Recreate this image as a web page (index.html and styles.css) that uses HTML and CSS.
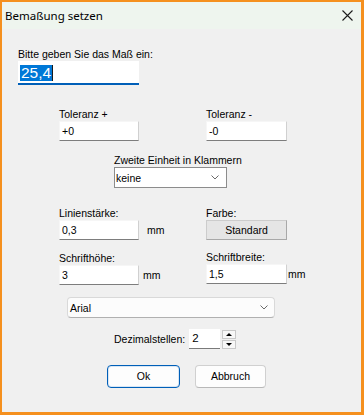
FILE: index.html
```html
<!DOCTYPE html>
<html lang="de">
<head>
<meta charset="utf-8">
<title>Bemaßung setzen</title>
<link rel="stylesheet" href="styles.css">
</head>
<body>
<div class="window">
  <div class="titlebar">
    <span class="title">Bemaßung setzen</span>
    <svg class="close" width="11" height="11" viewBox="0 0 11 11"><path d="M0.5 0.5 L10.5 10.5 M10.5 0.5 L0.5 10.5" stroke="#1b1b1b" stroke-width="1.1" fill="none"/></svg>
  </div>
  <div class="content">
    <div class="main-field">
      <div class="label">Bitte geben Sie das Maß ein:</div>
      <div class="main-edit"><span class="sel">25,4</span></div>
    </div>

    <div class="pair tol">
      <div class="field">
        <div class="label">Toleranz +</div>
        <div class="edit">+0</div>
      </div>
      <div class="field">
        <div class="label">Toleranz -</div>
        <div class="edit wide">-0</div>
      </div>
    </div>

    <div class="unit">
      <div class="label">Zweite Einheit in Klammern</div>
      <div class="combo">
        <span>keine</span>
        <svg width="8" height="5" viewBox="0 0 8 5"><path d="M0.5 0.5 L4 4 L7.5 0.5" stroke="#6a6a6a" stroke-width="1" fill="none"/></svg>
      </div>
    </div>

    <div class="pair line">
      <div class="field">
        <div class="label">Linienstärke:</div>
        <div class="with-unit">
          <div class="edit">0,3</div>
          <span class="mm gap8">mm</span>
        </div>
      </div>
      <div class="field">
        <div class="label">Farbe:</div>
        <div class="classic-btn">Standard</div>
      </div>
    </div>

    <div class="pair font">
      <div class="field">
        <div class="label">Schrifthöhe:</div>
        <div class="with-unit">
          <div class="edit">3</div>
          <span class="mm gap4">mm</span>
        </div>
      </div>
      <div class="field up">
        <div class="label">Schriftbreite:</div>
        <div class="with-unit">
          <div class="edit wide">1,5</div>
          <span class="mm gap1">mm</span>
        </div>
      </div>
    </div>

    <div class="font-row">
      <div class="font-combo">
        <span>Arial</span>
        <svg width="8" height="5" viewBox="0 0 8 5"><path d="M0.5 0.5 L4 4 L7.5 0.5" stroke="#6a6a6a" stroke-width="1" fill="none"/></svg>
      </div>
    </div>

    <div class="dec-row">
      <span class="dec-label">Dezimalstellen:</span>
      <div class="dec-edit">2</div>
      <div class="spin">
        <div class="spin-btn"><svg width="6" height="3" viewBox="0 0 6 3"><path d="M0 3 L3 0 L6 3 Z" fill="#000"/></svg></div>
        <div class="spin-btn"><svg width="6" height="3" viewBox="0 0 6 3"><path d="M0 0 L6 0 L3 3 Z" fill="#000"/></svg></div>
      </div>
    </div>

    <div class="buttons">
      <div class="btn default">Ok</div>
      <div class="btn">Abbruch</div>
    </div>
  </div>
</div>
</body>
</html>
```

FILE: styles.css
```css
* { box-sizing: border-box; margin: 0; padding: 0; }
html, body { width: 364px; height: 415px; overflow: hidden; }
body {
  font-family: "Liberation Sans", Arial, sans-serif;
  font-size: 10.5px;
  color: #000;
  background: #f5901e;
}
.window {
  width: 364px;
  height: 415px;
  border-style: solid;
  border-color: #f5901e;
  border-width: 2px 3px 3px 2px;
  display: flex;
  flex-direction: column;
  background: #f0f0f0;
}
.titlebar {
  height: 27px;
  flex: none;
  background: #eef5ee;
  display: flex;
  align-items: center;
  justify-content: space-between;
  padding: 0 8px 0 3px;
  border-radius: 5px 5px 0 0;
}
.title {
  font-family: "Noto Sans", "Open Sans", sans-serif;
  font-size: 11.5px;
  color: #000;
}
.close { display: block; }
.content {
  flex: 1;
  display: flex;
  flex-direction: column;
  background: #f0f0f0;
}
.label { line-height: 13px; white-space: nowrap; }

.main-field { margin: 19px 0 0 16px; }
.main-edit {
  width: 121px;
  height: 24px;
  background: #fff;
  border-bottom: 2px solid #005fb8;
  padding: 4px 0 0 2px;
}
.sel {
  display: inline-block;
  height: 16px;
  line-height: 16px;
  background: #0078d7;
  color: #fff;
  font-family: "Liberation Sans", Arial, sans-serif;
  font-size: 15.5px;
  padding: 0 1px;
  border-right: 1px solid #1a1a1a;
}

.pair {
  display: grid;
  grid-template-columns: 147px 1fr;
  padding-left: 57px;
}
.pair.tol { margin-top: 23px; }
.pair.line { margin-top: 19px; }
.pair.font { margin-top: 12px; }
.field { display: flex; flex-direction: column; align-items: flex-start; }
.field.up { margin-top: -1px; }
.edit {
  width: 80px;
  height: 20px;
  background: #fff;
  border: 1px solid;
  border-color: #f6f6f6 #d0d0d0 #7d7d7d #f6f6f6;
  padding-left: 2px;
  line-height: 18px;
}
.edit.wide { width: 81px; }
.with-unit { display: flex; align-items: center; }
.mm { line-height: 13px; }
.gap8 { margin-left: 8px; }
.gap4 { margin-left: 4px; }
.gap1 { margin-left: 1px; }

.unit { margin: 13px 0 0 112px; }
.combo {
  width: 113px;
  height: 21px;
  background: #fff;
  border: 1px solid #8c8c8c;
  display: flex;
  align-items: center;
  justify-content: space-between;
  padding: 0 7px 0 1px;
}
.combo svg, .font-combo svg { display: block; }

.classic-btn {
  width: 81px;
  height: 20px;
  background: #e5e5e5;
  border: 1px solid;
  border-color: #cccccc #a8a8a8 #a8a8a8 #cccccc;
  text-align: center;
  line-height: 18px;
}

.font-row { margin: 12px 0 0 65px; }
.font-combo {
  width: 208px;
  height: 21px;
  background: #fcfcfc;
  border: 1px solid;
  border-color: #d9d9d9 #d9d9d9 #b0b0b0 #d9d9d9;
  border-radius: 4px;
  display: flex;
  align-items: center;
  justify-content: space-between;
  padding: 0 6px 0 2px;
}

.dec-row {
  margin: 11px 0 0 112px;
  display: flex;
  align-items: center;
  height: 20px;
}
.dec-label { line-height: 13px; }
.dec-edit {
  margin-left: 4px;
  width: 31px;
  height: 20px;
  background: #fff;
  border-bottom: 1px solid #7a7a7a;
  padding-left: 3px;
  line-height: 19px;
  font-size: 11.5px;
}
.spin {
  margin-left: 2px;
  display: flex;
  flex-direction: column;
  gap: 1px;
  height: 19px;
}
.spin-btn {
  width: 14px;
  height: 9px;
  background: #f7f7f7;
  border: 1px solid #c8c8c8;
  display: flex;
  align-items: center;
  justify-content: center;
}
.spin-btn svg { display: block; }

.buttons {
  margin: 16px 0 0 105px;
  display: flex;
  gap: 15px;
}
.btn {
  width: 71px;
  height: 23px;
  background: #fdfdfd;
  border: 1px solid;
  border-color: #d0d0d0 #d0d0d0 #b8b8b8 #d0d0d0;
  border-radius: 4px;
  text-align: center;
  line-height: 21px;
}
.btn.default {
  width: 73px;
  border: 1px solid #005fb8;
  box-shadow: inset 0 0 0 1px #d8e6f4;
}
```
